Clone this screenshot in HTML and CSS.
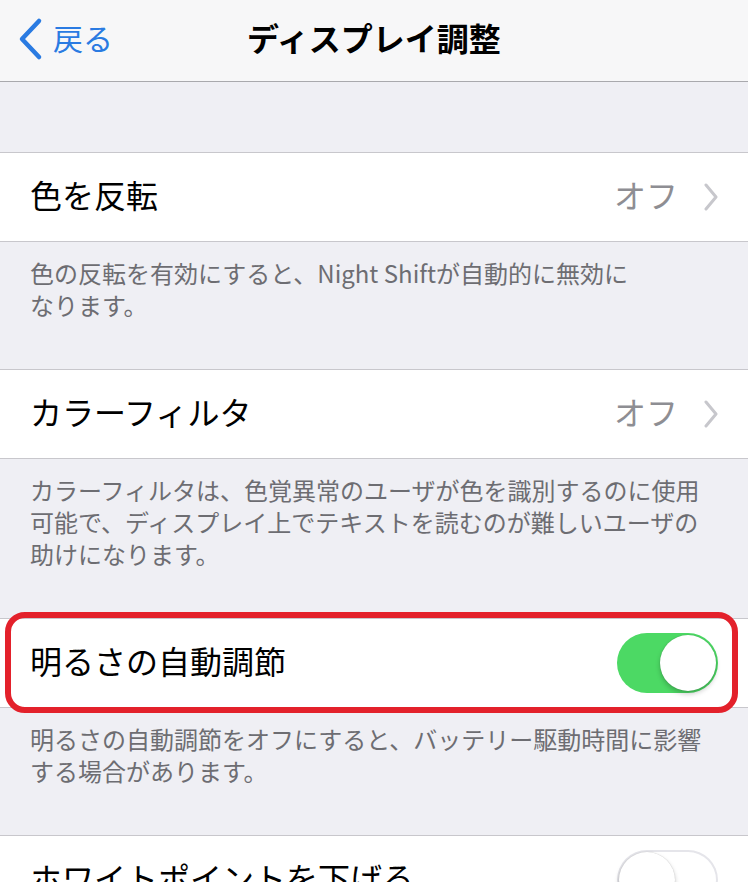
FILE: index.html
```html
<!DOCTYPE html>
<html lang="ja">

<head>
  <meta charset="UTF-8">
  <meta name="viewport" content="width=device-width, initial-scale=1.0">
  <title>ディスプレイ調整</title>
  <link rel="stylesheet" href="styles.css">
</head>

<body>
  <header class="navbar">
    <a class="back" href="#">
      <svg class="back-icon" width="28" height="44" viewBox="0 0 28 44">
        <polyline points="23,4 6,22 23,40" fill="none" stroke="currentColor" stroke-width="4.5" stroke-linecap="round" stroke-linejoin="round" />
      </svg>
      <span>戻る</span>
    </a>
    <h1 class="title">ディスプレイ調整</h1>
    <span></span>
  </header>

  <main class="settings">
    <!-- 色を反転 -->
    <section class="group">
      <div class="cell">
        <span class="cell-label">色を反転</span>
        <span class="cell-value">オフ</span>
        <svg class="chevron" width="14" height="28" viewBox="0 0 14 28">
          <polyline points="2,2 12,14 2,26" fill="none" stroke="currentColor" stroke-width="3" stroke-linecap="round" stroke-linejoin="round" />
        </svg>
      </div>
      <p class="group-footer">色の反転を有効にすると、Night Shiftが自動的に無効に<br>なります。</p>
    </section>

    <!-- カラーフィルタ -->
    <section class="group">
      <div class="cell">
        <span class="cell-label">カラーフィルタ</span>
        <span class="cell-value">オフ</span>
        <svg class="chevron" width="14" height="28" viewBox="0 0 14 28">
          <polyline points="2,2 12,14 2,26" fill="none" stroke="currentColor" stroke-width="3" stroke-linecap="round" stroke-linejoin="round" />
        </svg>
      </div>
      <p class="group-footer">カラーフィルタは、色覚異常のユーザが色を識別するのに使用<br>可能で、ディスプレイ上でテキストを読むのが難しいユーザの<br>助けになります。</p>
    </section>

    <!-- 明るさの自動調節 -->
    <section class="group">
      <div class="cell highlighted">
        <span class="cell-label">明るさの自動調節</span>
        <span class="switch on"><span class="knob"></span></span>
      </div>
      <p class="group-footer">明るさの自動調節をオフにすると、バッテリー駆動時間に影響<br>する場合があります。</p>
    </section>

    <!-- ホワイトポイント -->
    <section class="group">
      <div class="cell">
        <span class="cell-label">ホワイトポイントを下げる</span>
        <span class="switch"><span class="knob"></span></span>
      </div>
    </section>
  </main>
</body>

</html>
```

FILE: styles.css
```css
body {
  margin: 0;
  background-color: #efeff4;
  font-family: "Noto Sans CJK JP", "Noto Sans", sans-serif;
  color: #000;
  overflow: hidden;
}

.navbar {
  display: grid;
  grid-template-columns: 1fr auto 1fr;
  align-items: center;
  box-sizing: border-box;
  height: 82px;
  padding: 0 16px 8px;
  background-color: #f7f7f8;
  border-bottom: 1px solid #a9a9ad;
}

.back {
  display: flex;
  align-items: center;
  gap: 9px;
  color: #2a7be2;
  font-size: 30px;
  text-decoration: none;
}

.back-icon {
  display: block;
  margin-top: 4px;
}

.title {
  margin: 0;
  font-size: 32px;
  font-weight: 700;
  text-align: center;
}

.settings {
  padding-top: 70px;
}

.cell {
  display: flex;
  align-items: center;
  box-sizing: border-box;
  height: 90px;
  padding: 0 30px 6px;
  background-color: #fff;
  border-top: 1px solid #c8c7cc;
  border-bottom: 1px solid #c8c7cc;
  font-size: 32px;
}

.cell-label {
  flex: 1;
  white-space: nowrap;
}

.cell-value {
  color: #8e8e93;
  margin-right: 26px;
}

.chevron {
  display: block;
  color: #c7c7cc;
  margin-top: 6px;
}

.highlighted {
  position: relative;
}

.highlighted::after {
  content: "";
  position: absolute;
  top: -7px;
  bottom: -6px;
  left: 5px;
  right: 10px;
  border: 6px solid #e3212b;
  border-radius: 20px;
  pointer-events: none;
}

.group-footer {
  margin: 0;
  padding: 15px 30px 48px;
  font-size: 24px;
  line-height: 32px;
  color: #6d6d72;
}

.switch {
  display: flex;
  justify-content: flex-start;
  align-items: center;
  box-sizing: border-box;
  width: 101px;
  height: 60px;
  margin-top: 6px;
  padding: 2px;
  border-radius: 30px;
  background-color: #fff;
  box-shadow: inset 0 0 0 2px #e5e5ea;
}

.switch.on {
  justify-content: flex-end;
  background-color: #4cd964;
  box-shadow: none;
}

.knob {
  width: 56px;
  height: 56px;
  border-radius: 50%;
  background-color: #fff;
  box-shadow: 0 3px 5px rgba(0, 0, 0, 0.22), 0 0 1px rgba(0, 0, 0, 0.25);
}
```
